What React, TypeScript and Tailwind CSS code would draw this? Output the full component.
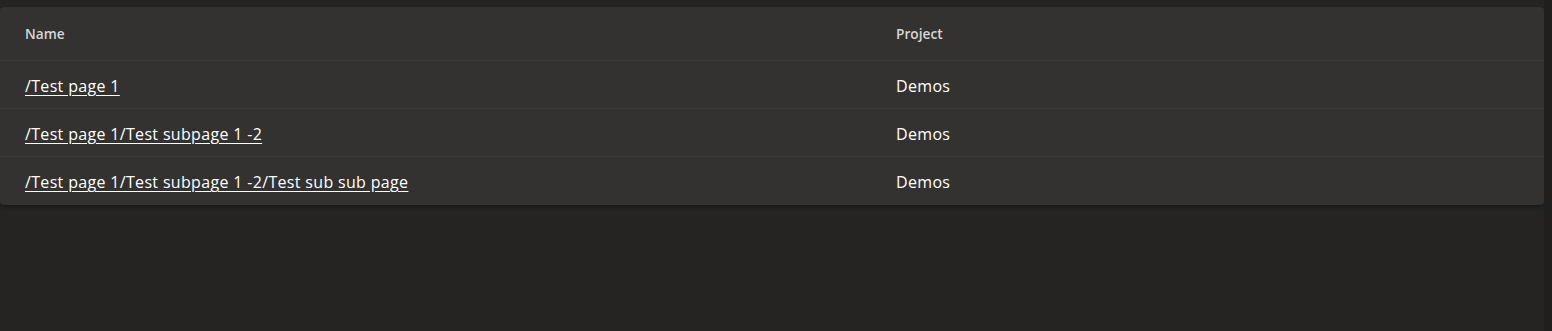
const rows = [
    { name: "/Test page 1", project: "Demos" },
    { name: "/Test page 1/Test subpage 1 -2", project: "Demos" },
    { name: "/Test page 1/Test subpage 1 -2/Test sub sub page", project: "Demos" },
];

const App = () => {
    return (
        <div
            className="flex h-[331px] w-full bg-[#252423] text-white"
            style={{ fontFamily: '"Segoe UI", "Open Sans", "Noto Sans", sans-serif' }}
        >
            <div className="flex-1 pt-[7px]">
                <div className="rounded-[4px] bg-[#333231] shadow-[0_2px_4px_rgba(0,0,0,0.35)]">
                    <div className="grid h-[54px] grid-cols-[871px_1fr] items-center border-b border-[#3d3c3b] pl-[25px] pt-[2px] text-[13.7px] font-semibold text-[#d6d6d6]">
                        <span>Name</span>
                        <span>Project</span>
                    </div>
                    {rows.map((row, i) => (
                        <div
                            key={row.name}
                            className={`grid h-[48px] grid-cols-[871px_1fr] items-center pl-[25px] pt-[2px] text-[16px] tracking-[0.33px] ${i < rows.length - 1 ? "border-b border-[#3d3c3b]" : ""}`}
                        >
                            <a href="#" className="underline underline-offset-[3px]">
                                {row.name}
                            </a>
                            <span>{row.project}</span>
                        </div>
                    ))}
                </div>
            </div>
            <div className="w-[8px] bg-[#201f1f]" />
        </div>
    );
};

export default App;
